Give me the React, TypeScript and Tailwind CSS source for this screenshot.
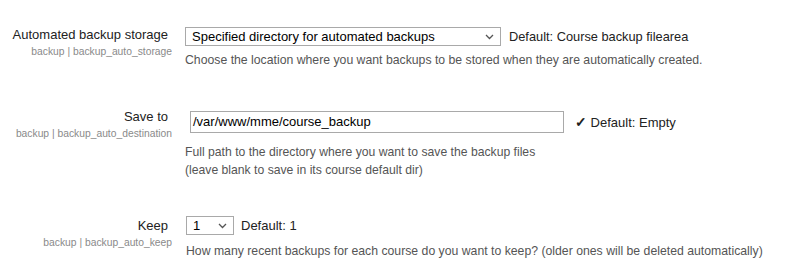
import React from 'react'

const Chevron = () => (
  <svg width="9" height="6" viewBox="0 0 9 6" className="shrink-0">
    <path d="M1 1 L4.5 4.5 L8 1" fill="none" stroke="#555" strokeWidth="1.3" />
  </svg>
)

const FakeSelect = ({ value, width }: { value: string; width: string }) => (
  <div
    className={`flex h-[19px] items-center justify-between border border-[#a9a9a9] bg-white pl-[6px] pr-[6px] text-[13px] leading-[17px] text-black ${width}`}
  >
    <span>{value}</span>
    <Chevron />
  </div>
)

interface LabelProps {
  label: string
  name: string
}

const Label: React.FC<LabelProps> = ({ label, name }) => (
  <div className="w-[172px] shrink-0 text-right">
    <div className="pr-[4px] text-[13px] leading-[20px] text-[#222]">{label}</div>
    <div className="text-[10.3px] leading-[13px] text-[#8a8a8a]">backup | {name}</div>
  </div>
)

export default function App() {
  return (
    <div className="h-[263px] w-[809px] overflow-hidden bg-white font-['Liberation_Sans',Arial,sans-serif]">
      {/* automated backup storage */}
      <div className="flex pt-[25px]">
        <Label label="Automated backup storage" name="backup_auto_storage" />
        <div className="ml-[13px]">
          <div className="mt-[2px] flex items-center">
            <FakeSelect value="Specified directory for automated backups" width="w-[316px]" />
            <span className="ml-[8px] text-[12.8px] text-[#222]">Default: Course backup filearea</span>
          </div>
          <div className="mt-[6px] text-[12.25px] leading-[17px] text-[#555]">
            Choose the location where you want backups to be stored when they are automatically created.
          </div>
        </div>
      </div>

      {/* save to */}
      <div className="mt-[38px] flex">
        <Label label="Save to" name="backup_auto_destination" />
        <div className="ml-[13px]">
          <div className="mt-[4px] flex items-center">
            <div className="ml-[5px] flex h-[22px] w-[374px] items-center border border-[#a9a9a9] bg-white px-[2px] text-[13px] text-black">
              /var/www/mme/course_backup
            </div>
            <span className="ml-[11px] text-[13px] text-[#222]">
              <span className="text-[14px] font-bold">✓</span> Default: Empty
            </span>
          </div>
          <div className="mt-[10px] text-[12.2px] leading-[18px] text-[#555]">
            Full path to the directory where you want to save the backup files
            <br />
            (leave blank to save in its course default dir)
          </div>
        </div>
      </div>

      {/* keep */}
      <div className="mt-[37px] flex">
        <Label label="Keep" name="backup_auto_keep" />
        <div className="ml-[14px]">
          <div className="flex items-center">
            <FakeSelect value="1" width="w-[48px]" />
            <span className="ml-[7px] text-[13px] text-[#222]">Default: 1</span>
          </div>
          <div className="mt-[7px] text-[12.25px] leading-[17px] text-[#555]">
            How many recent backups for each course do you want to keep? (older ones will be deleted automatically)
          </div>
        </div>
      </div>
    </div>
  )
}
